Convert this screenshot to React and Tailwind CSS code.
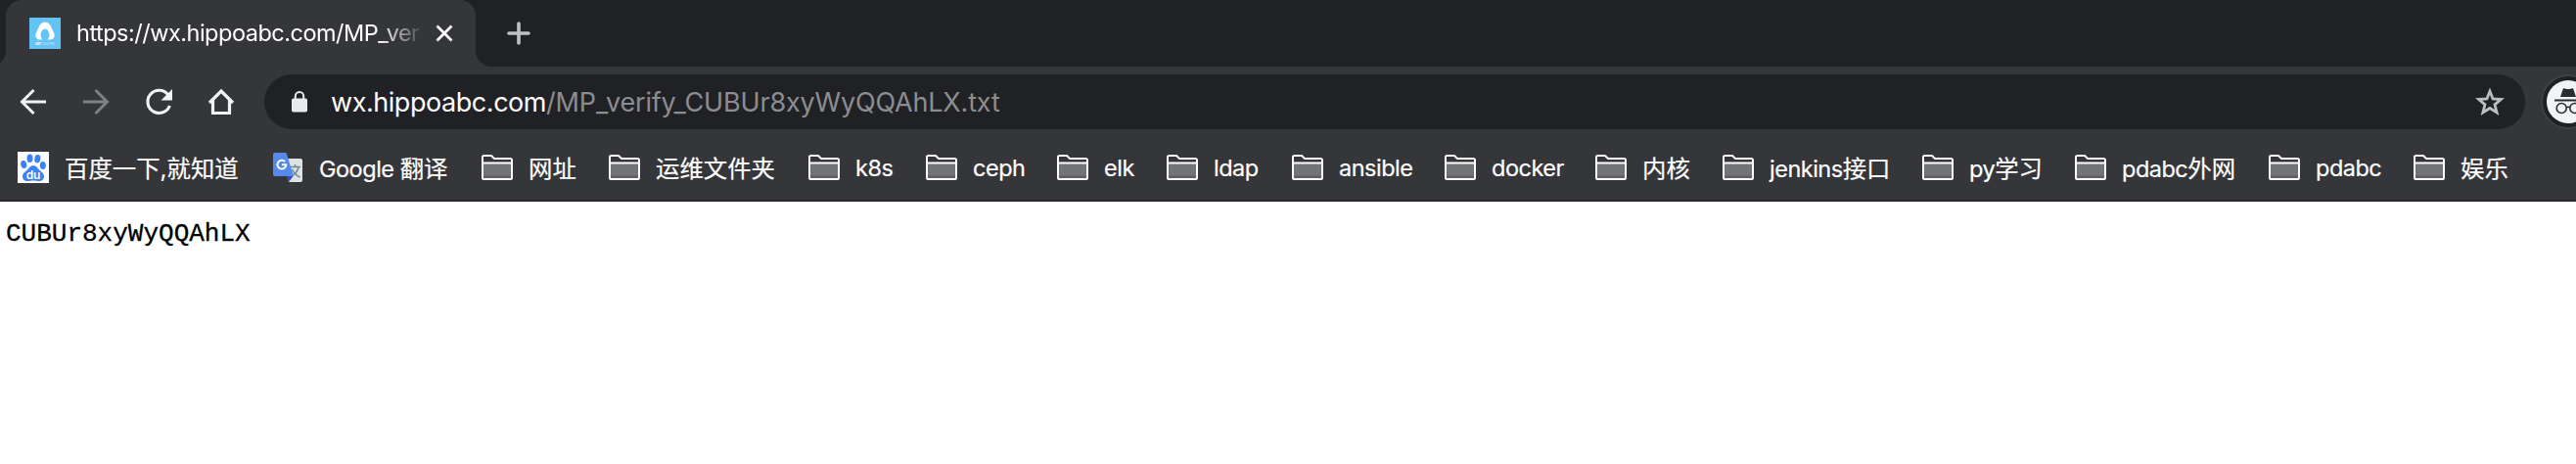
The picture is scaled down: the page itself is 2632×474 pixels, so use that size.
const folders = [
  { cjk: "网址", width: "w-[130px]" },
  { cjk: "运维文件夹", width: "w-[204px]" },
  { latin: "k8s", width: "w-[120px]" },
  { latin: "ceph", width: "w-[134px]" },
  { latin: "elk", width: "w-[112px]" },
  { latin: "ldap", width: "w-[128px]" },
  { latin: "ansible", width: "w-[156px]" },
  { latin: "docker", width: "w-[154px]" },
  { cjk: "内核", width: "w-[130px]" },
  { latin: "jenkins", cjk: "接口", width: "w-[204px]" },
  { latin: "py", cjk: "学习", width: "w-[156px]" },
  { latin: "pdabc", cjk: "外网", width: "w-[198px]" },
  { latin: "pdabc", width: "w-[148px]" },
  { cjk: "娱乐", width: "w-[130px]" },
];

const TabFavicon = () => (
  <svg className="w-8 h-8 shrink-0" viewBox="0 0 32 32">
    <rect width="32" height="32" fill="#64c3f5" />
    <path
      d="M16 4.500c-3.200 0-5 2.200-6.600 5.700C7.900 13.600 6.300 16 6.300 18.200c0 2.300 1.900 4.200 4.800 4.400 1.500.1 2.400-.3 2.400-.3s-2-1.700-2-4.200c0-2.900 1.700-6.700 4.500-6.700s4.500 3.800 4.500 6.700c0 2.500-2 4.200-2 4.200s.9.4 2.400.3c2.900-.2 4.800-2.100 4.800-4.400 0-2.200-1.600-4.600-3.100-8C21 6.700 19.200 4.500 16 4.500z"
      fill="#fff"
    />
    <text x="6" y="28.300" fontSize="5" textLength="20" fill="#e4f5fe" fontFamily="Inter, sans-serif">
      <tspan fontWeight="700">air</tspan>
      <tspan fillOpacity="0.6">course</tspan>
    </text>
  </svg>
);

const BaiduIcon = () => (
  <svg className="w-8 h-8 shrink-0" viewBox="0 0 32 32">
    <rect width="32" height="32" fill="#fff" />
    <g fill="#3b82f7">
      <ellipse cx="12.500" cy="6.800" rx="3" ry="4.300" />
      <ellipse cx="20.300" cy="7.200" rx="3" ry="4.200" transform="rotate(10 20.300 7.200)" />
      <ellipse cx="6.200" cy="13" rx="3" ry="4" transform="rotate(-12 6.200 13)" />
      <ellipse cx="25.800" cy="14" rx="3" ry="3.900" />
      <path d="M16 14c-2.800 0-3.900 2.200-5.800 4.300-2 2.200-5.200 3.600-5.200 7 0 3.100 2.200 4.800 5 4.800 2 0 3.800-.5 6-.5s4 .5 6 .5c2.800 0 5-1.700 5-4.800 0-3.400-3.200-4.800-5.200-7C19.900 16.200 18.800 14 16 14z" />
    </g>
    <text x="8.800" y="27.500" fontSize="12" fontWeight="600" textLength="14" fill="#fff" fontFamily="Inter, sans-serif">
      du
    </text>
  </svg>
);

const TranslateIcon = () => (
  <svg className="w-8 h-8 shrink-0" viewBox="0 0 32 32">
    <path d="M12 7h17a2 2 0 0 1 2 2v20a2 2 0 0 1-2 2H17z" fill="#dfe1e3" />
    <path
      d="M18 15.500h11M23.500 13v2.500M27 15.500c-.8 4.300-4 8-8 9.500M20.500 18c1.500 3.500 4.500 6.500 8 8"
      fill="none"
      stroke="#6d8a96"
      strokeWidth="1.500"
    />
    <path d="M15.500 25h6L17 31z" fill="#3748b8" />
    <path d="M3 1h11.500L22 25H3a2 2 0 0 1-2-2V3a2 2 0 0 1 2-2z" fill="#5489ee" />
    <path d="M13.200 10.200A4.400 4.400 0 1 0 14.300 13.300H10" fill="none" stroke="#fff" strokeWidth="1.900" />
  </svg>
);

const FolderIcon = () => (
  <svg className="w-8 h-[26px] shrink-0" viewBox="0 0 32 26">
    <path d="M2 9h28v13H2z" fill="#727375" />
    <path d="M2 21.500h28V24H2z" fill="#606164" />
    <path d="M1 24V2.500A1.500 1.500 0 0 1 2.500 1H10l3 3h16.500A1.500 1.500 0 0 1 31 5.500V24a1 1 0 0 1-1 1H2a1 1 0 0 1-1-1zM1 8.500h30" fill="none" stroke="#fff" strokeWidth="2" />
  </svg>
);

const Label = ({ latin, cjk }) => (
  <span className="pt-0.5 whitespace-pre">
    {latin}
    {cjk && <span className="text-[24.4px] tracking-normal">{cjk}</span>}
  </span>
);

const TabStrip = () => (
  <div className="flex h-[68px] bg-[#35363a]">
    <div className="w-4 h-full -ml-2.5 shrink-0 rounded-br-2xl bg-[#202124]" />
    <div className="w-[480px] shrink-0 bg-[#202124]">
      <div className="flex items-center h-full pl-6 rounded-t-2xl bg-[#35363a]">
        <TabFavicon />
        <span className="w-[352px] ml-4 whitespace-nowrap text-[23.5px] tracking-[-0.5px] text-white mask-[linear-gradient(to_right,black_310px,transparent_356px)]">
          https://wx.hippoabc.com/MP_ver
        </span>
        <svg className="w-[18px] h-[18px] ml-[15px]" viewBox="0 0 18 18" stroke="#fff" strokeWidth="2.800">
          <path d="M1.500 1.500l15 15M16.500 1.500l-15 15" />
        </svg>
      </div>
    </div>
    <div className="flex items-center grow rounded-bl-2xl bg-[#202124] pl-8">
      <svg className="w-6 h-6" viewBox="0 0 24 24" stroke="#bfc1c5" strokeWidth="3.600" strokeLinecap="round">
        <path d="M12 2v20M2 12h20" />
      </svg>
    </div>
  </div>
);

const Toolbar = () => (
  <div className="flex items-center h-[72px] pl-[18px] overflow-hidden">
    <div className="flex items-center gap-7 shrink-0">
      <svg className="w-8 h-8" viewBox="0 0 32 32" fill="none" stroke="#f1f3f4" strokeWidth="3">
        <path d="M29 16H5M16.500 4L4.500 16l12 12" />
      </svg>
      <svg className="w-8 h-8 ml-1" viewBox="0 0 32 32" fill="none" stroke="#808184" strokeWidth="3">
        <path d="M3 16h24M15.500 4l12 12-12 12" />
      </svg>
      <svg className="w-8 h-8 ml-1" viewBox="0 0 32 32">
        <path d="M25.600 8.600A11.600 11.600 0 1 0 27.400 20" fill="none" stroke="#f1f3f4" strokeWidth="3.100" />
        <path d="M30 3v11.500H18.500z" fill="#f1f3f4" />
      </svg>
      <svg className="w-8 h-8 ml-1" viewBox="0 0 32 32" fill="none" stroke="#f1f3f4" strokeWidth="3.200">
        <path d="M4 17L16 5l12 12M7.500 14v13.500h17V14" />
      </svg>
    </div>
    <div className="flex items-center shrink-0 w-[2310px] h-14 ml-7 pl-7 pr-5 rounded-full bg-[#202124]">
      <svg className="w-4 h-[22px]" viewBox="0 0 16 22">
        <path d="M3.800 9V5.200a4.200 4.200 0 0 1 8.400 0V9" fill="none" stroke="#e8eaed" strokeWidth="2" />
        <rect y="7.500" width="16" height="14" rx="1.800" fill="#e8eaed" />
      </svg>
      <p className="grow ml-6 pt-0.5 whitespace-nowrap text-[27px] text-[#8c8d90] tracking-[-0.17px]">
        <span className="text-white tracking-[-0.45px]">wx.hippoabc.com</span>
        /MP_verify_CUBUr8xyWyQQAhLX.txt
      </p>
      <svg className="w-8 h-8" viewBox="0 0 32 32" fill="none" stroke="#bdbebf" strokeWidth="2.800">
        <path d="M16 5.200l3.100 7.700 8.300.6-6.400 5.300 2.100 8.100-7.100-4.400-7.100 4.400 2.100-8.100-6.400-5.300 8.300-.6z" />
      </svg>
    </div>
    {/* incognito badge, cut off by the window edge */}
    <svg className="w-14 h-14 ml-4 shrink-0" viewBox="0 0 56 56">
      <circle cx="28" cy="28" r="27" fill="#202124" stroke="#3f4044" strokeWidth="2" />
      <circle cx="28" cy="28" r="22" fill="#f1f3f4" />
      <path d="M20 23l2.500-7.500c.4-1.200 1.300-1.500 2.300-1.100 2 .8 4.400.8 6.400 0 1-.4 1.900-.1 2.300 1.100L36 23z" fill="#2b2c30" />
      <path d="M14 26.500h28" stroke="#2b2c30" strokeWidth="2" />
      <g fill="none" stroke="#2b2c30" strokeWidth="1.600">
        <circle cx="21.200" cy="34.500" r="5" />
        <circle cx="34.800" cy="34.500" r="5" />
        <path d="M26.200 34c1-.8 2.600-.8 3.600 0" />
      </g>
    </svg>
  </div>
);

const BookmarksBar = () => (
  <div className="flex items-center h-[66px] pl-[18px] pb-0.5 text-[23.5px] tracking-[-0.5px] text-white border-b-2 border-[#28292c] [-webkit-text-stroke:0.2px]">
    <div className="flex items-center shrink-0 gap-4 w-[260px]">
      <BaiduIcon />
      <Label cjk="百度一下,就知道" />
    </div>
    <div className="flex items-center shrink-0 gap-4 w-[214px]">
      <TranslateIcon />
      <Label latin="Google " cjk="翻译" />
    </div>
    {folders.map((f, i) => (
      <div key={i} className={`flex items-center shrink-0 gap-4 ${f.width}`}>
        <FolderIcon />
        <Label {...f} />
      </div>
    ))}
  </div>
);

const App = () => {
  return (
    <main className="w-full h-[474px] overflow-hidden bg-white font-['Inter','Noto_Sans_CJK_SC',sans-serif]">
      <header className="bg-[#35363a]">
        <TabStrip />
        <Toolbar />
        <BookmarksBar />
      </header>
      <pre className="px-1.5 pt-[17px] text-[26px] leading-8 text-black font-['Liberation_Mono','Courier_New',monospace] [-webkit-text-stroke:0.3px]">
        CUBUr8xyWyQQAhLX
      </pre>
    </main>
  );
};

export default App;
